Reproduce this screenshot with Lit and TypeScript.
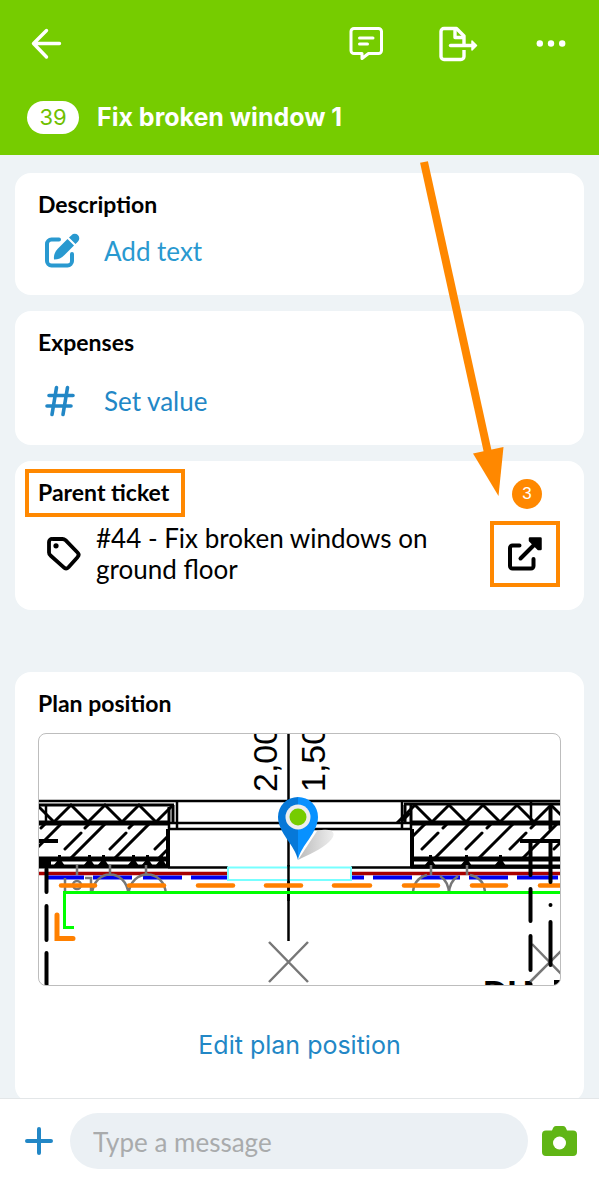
import { LitElement, html, svg, css } from "lit";
import { customElement } from "lit/decorators.js";

const range = (n: number) => Array.from({ length: n }, (_, i) => i);

@customElement("plan-preview")
class PlanPreview extends LitElement {
  static styles = css`
    :host {
      display: block;
      border: 1px solid #bdbdbd;
      border-radius: 8px;
      overflow: hidden;
      background: #fff;
    }
    svg {
      display: block;
      width: 100%;
      height: auto;
    }
    .dim {
      font: 34px "Liberation Sans", Arial, sans-serif;
    }
    .room {
      font: bold 34px "Liberation Sans", Arial, sans-serif;
    }
  `;

  private brace(x: number) {
    return svg`<path d="M${x - 18} 822L${x} 804L${x + 18} 822" />`;
  }

  render() {
    const blue = [[48, 84], [93, 132], [143, 182], [191, 230], [349, 364], [373, 412], [421, 460], [469, 508], [517, 558]];
    const orange = [[61, 95], [129, 164], [198, 233], [266, 301], [334, 370], [404, 438], [472, 506], [540, 566]];
    return html`
      <svg viewBox="39 733 521 251" role="img" aria-label="Floor plan with ticket pin">
        <defs>
          <clipPath id="wall-l"><rect x="39" y="822" width="128" height="37" /></clipPath>
          <clipPath id="wall-r"><rect x="412" y="822" width="148" height="37" /></clipPath>
          <linearGradient id="shade" x1="0" x2="1">
            <stop offset="0" stop-color="#bbb" />
            <stop offset="1" stop-color="#eee" />
          </linearGradient>
        </defs>
        <text class="dim" transform="translate(277 791) rotate(-90)">2,00</text>
        <text class="dim" transform="translate(325 791) rotate(-90)">1,50</text>

        <g fill="none" stroke="#000" stroke-width="3">
          ${[37, 71, 105, 139].map((x) => this.brace(x))}
          ${range(5).map((i) => this.brace(415 + i * 34))}
          <path d="M156 821L173 804M402 820L410 812" />
        </g>
        <g clip-path="url(#wall-l)" stroke="#000" stroke-width="3" stroke-linecap="round">
          ${range(5).map((i) => svg`<path d="M${-20 + i * 44} 860L${20 + i * 44} 820M${20 + i * 45} 848L${36 + i * 45} 832M${41 + i * 44} 827L${48 + i * 44} 820" />`)}
        </g>
        <g clip-path="url(#wall-r)" stroke="#000" stroke-width="3" stroke-linecap="round">
          ${range(6).map((i) => svg`<path d="M${388 + i * 44} 860L${428 + i * 44} 820M${422 + i * 44} 848L${438 + i * 44} 832M${443 + i * 44} 827L${450 + i * 44} 820" />`)}
        </g>

        <g fill="none" stroke="#000">
          <path stroke-width="2.500" d="M39 800H560M169 822H411M169 828H411M46 804V822M177 800V828M402 800V828M169 822V828M168 866.500H228M351 866.500H560M531 800V822M411 822V828" />
          <path stroke-width="3" d="M39 804H174M404 803H560M173 804V822M169 806V822M405 804V822M411 804V822" />
          <path stroke-width="5" d="M39 822H168M411 822H560M39 858H168M411 858H560" />
          <path stroke-width="4" d="M168 828V866M412 828V866M39 840H58M520 840H560M39 865.500H168M411 865.500H560" />
          <path stroke-width="2.500" d="M288.500 733V940" />
        </g>
        <rect x="39" y="857" width="12" height="10" />
        <g>
          ${[59, 89, 103, 133, 147, 161, 430, 466, 500].map((x) => svg`<path d="M${x - 6} 865L${x - 1} 859V854H${x + 2}V859L${x + 6} 865Z" />`)}
        </g>

        <path d="M39 872.500H230M349 872.500H560" stroke="#a80000" stroke-width="3.500" />
        <g stroke="#0000f0" stroke-width="4">
          ${blue.map(([a, b]) => svg`<path d="M${a} 876.500H${b}" />`)}
        </g>
        <g fill="none" stroke="#777" stroke-width="2.500">
          <path d="M77 864V874M110 864V874M146 864V874M92 893C94 867 126 867 128.500 893C131 867 164 867 166 893M65 877V892M85 877H91V892M431 864V874M467 864V874M413 893C413 881 420 876 427 874M440 875C446 879 449 886 449 893C449 886 452 879 458 875M470 874C479 876 485 882 485 893" />
          <circle cx="77" cy="884" r="4" />
          <path d="M269 941L308 981M308 941L269 981M532 943L566 978M530 981L566 945" />
        </g>
        <rect x="228" y="866.500" width="123" height="12.500" fill="#fff" stroke="#7ff" stroke-width="2" />
        <path d="M288.500 864V900" stroke="#000" stroke-width="2.500" />
        <g stroke="#ff8000" stroke-width="4.500" stroke-linecap="round">
          ${orange.map(([a, b]) => svg`<path d="M${a} 884.500H${b}" />`)}
        </g>
        <path d="M560 891.500H64.500V926.500H74" fill="none" stroke="#0f0" stroke-width="3" />
        <path d="M57 914V937.500H73" fill="none" stroke="#ff8000" stroke-width="5" stroke-linecap="round" />
        <g stroke="#000" stroke-width="4" stroke-linecap="round">
          <path d="M46.500 868V891M46.500 905V939M46.500 952V984M530.500 842V874M530.500 888V920M530.500 935V969M530.500 983V986M550.500 806V828M550.500 840V881M550.500 904V904.100M550.500 921V964" />
        </g>
        <text class="room" x="483" y="1003">DU</text>
        <rect x="554" y="979" width="6" height="6" />

        <path d="M298 859L317 830C334 826 338 833 329 841C322 848 308 854 298 859Z" fill="url(#shade)" />
        <path d="M298 859C295 844 278 832 278 816A20 20 0 0 1 298 796Z" fill="#0678d8" />
        <path d="M298 859C301 844 318 832 318 816A20 20 0 0 0 298 796Z" fill="#0791ff" />
        <circle cx="298" cy="816" r="12.500" fill="#eee" />
        <circle cx="298" cy="816" r="8.500" fill="#76cc00" />
      </svg>
    `;
  }
}

@customElement("app-root")
class AppRoot extends LitElement {
  static styles = css`
    :host {
      display: flex;
      flex-direction: column;
      position: relative;
      height: 100vh;
      background: #eef3f6;
      color: #000;
      font-family: Lato, "Open Sans", sans-serif;
    }
    * {
      box-sizing: border-box;
    }
    h1, h2, p {
      margin: 0;
    }
    svg {
      display: block;
      flex: none;
    }
    button {
      display: flex;
      align-items: center;
      border: 0;
      padding: 0;
      background: none;
      color: inherit;
      font: inherit;
      text-align: left;
      cursor: pointer;
    }
    header {
      flex: none;
      background: #76cc00;
      color: #fff;
      padding: 24px 32px 21px 27px;
      font-family: Inter, sans-serif;
    }
    .toolbar {
      display: flex;
      align-items: center;
      gap: 56px;
      height: 40px;
    }
    .back {
      margin-right: auto;
    }
    .title {
      display: flex;
      align-items: center;
      gap: 18px;
      margin-top: 36px;
    }
    .count {
      width: 52px;
      border-radius: 17px;
      background: #fff;
      color: #6fc000;
      font-size: 22px;
      line-height: 33px;
      text-align: center;
    }
    h1 {
      font-size: 25px;
      line-height: 34px;
      font-weight: 700;
    }
    main {
      flex: 1;
      min-height: 0;
      overflow-y: auto;
      scrollbar-width: none;
      display: flex;
      flex-direction: column;
      gap: 16px;
      padding: 18px 15px 0;
    }
    .card {
      flex: none;
      position: relative;
      background: #fff;
      border-radius: 16px;
      padding: 17px 23px 25px;
    }
    .plan {
      margin-top: 46px;
    }
    h2 {
      position: relative;
      width: fit-content;
      font-size: 23px;
      line-height: 28px;
      font-weight: 700;
    }
    .marked::after {
      content: "";
      position: absolute;
      inset: -9px -16px -11px -13px;
      border: 4px solid #ff8800;
    }
    .action {
      gap: 24px;
      width: 100%;
      margin-top: 14px;
      padding-left: 6px;
      font-size: 26px;
      line-height: 38px;
      color: #2999d0;
    }
    .value {
      margin-top: 26px;
      color: #2287c6;
    }
    .parent {
      display: flex;
      align-items: center;
      gap: 14px;
      margin-top: 17px;
      padding-left: 8px;
      font-size: 26px;
      line-height: 31px;
    }
    .parent p {
      flex: 1;
    }
    .open {
      justify-content: center;
      width: 70px;
      height: 66px;
      margin: -2px 1px -2px 30px;
      border: 4px solid #ff8800;
    }
    .step {
      position: absolute;
      top: 18px;
      right: 42px;
      width: 30px;
      border-radius: 50%;
      background: #ff8800;
      color: #fff;
      font: 17px/30px "Liberation Sans", Arial, sans-serif;
      text-align: center;
    }
    plan-preview {
      margin-top: 16px;
    }
    .edit {
      margin: 43px auto 16px;
      font: 25px/32px Inter, sans-serif;
      color: #2287c6;
    }
    footer {
      flex: none;
      display: flex;
      align-items: center;
      gap: 14px;
      padding: 14px 22px 30px 22px;
      border-top: 1px solid #e3e6e8;
      background: #fff;
    }
    input {
      flex: 1;
      min-width: 0;
      height: 56px;
      border: 0;
      border-radius: 28px;
      padding: 2px 23px 0;
      background: #ebf0f4;
      color: #222;
      font: 26px Lato, sans-serif;
    }
    input::placeholder {
      color: #a9abac;
      opacity: 1;
    }
    .pointer {
      position: absolute;
      top: 160px;
      right: 94px;
      pointer-events: none;
    }
  `;

  render() {
    return html`
      <header>
        <div class="toolbar">
          <button class="back" aria-label="Back">
            <svg width="36" height="36" viewBox="0 0 36 36" fill="none" stroke="#fff" stroke-width="3.400" stroke-linecap="round" stroke-linejoin="round">
              <path d="M19.500 4.500L6.500 17.500L19.500 31M7 17.500H32.500" />
            </svg>
          </button>
          <button aria-label="Comments">
            <svg width="36" height="36" viewBox="0 0 36 36" fill="none" stroke="#fff" stroke-width="3" stroke-linecap="round" stroke-linejoin="round">
              <path d="M7 2.500H31.500A3 3 0 0 1 34.500 5.500V24.500A3 3 0 0 1 31.500 27.500H21.500L15 32.500V27.500H7A3 3 0 0 1 4 24.500V5.500A3 3 0 0 1 7 2.500Z" />
              <path d="M12.500 12H26M12.500 18H20.500" />
            </svg>
          </button>
          <button aria-label="Export">
            <svg width="40" height="36" viewBox="0 0 40 36" fill="none" stroke="#fff" stroke-width="3.400" stroke-linejoin="round">
              <path d="M25 18V10L17.500 2.500H5A3 3 0 0 0 2 5.500V30.500A3 3 0 0 0 5 33.500H22A3 3 0 0 0 25 30.500V24" />
              <path d="M16 3V11.500H24.500" />
              <path d="M11.500 19.500H34" stroke-linecap="round" />
              <path d="M33 15V24L37.500 19.500Z" fill="#fff" stroke-width="1.500" />
            </svg>
          </button>
          <button aria-label="More">
            <svg width="32" height="36" viewBox="0 0 32 36" fill="#fff">
              <circle cx="4.800" cy="17.500" r="3.200" /><circle cx="16" cy="17.500" r="3.200" /><circle cx="27.200" cy="17.500" r="3.200" />
            </svg>
          </button>
        </div>
        <div class="title">
          <span class="count">39</span>
          <h1>Fix broken window 1</h1>
        </div>
      </header>

      <main>
        <section class="card">
          <h2>Description</h2>
          <button class="action">
            <svg width="36" height="38" viewBox="0 0 36 38" fill="none" stroke="#2999d0">
              <path d="M15 7.500H7.500A4.500 4.500 0 0 0 3 12V29A4.500 4.500 0 0 0 7.500 33.500H23.500A4.500 4.500 0 0 0 28 29V22" stroke-width="4" stroke-linecap="round" />
              <path d="M10 27.500C9.500 23 11 19.500 14 16.500L23.500 7L30 13.500L20.500 23C17.500 26 14.500 27.500 10 27.500Z" fill="#2999d0" stroke="none" />
              <path d="M25 5.500L27.500 3.200A4.400 4.400 0 0 1 34 9.500L31.500 12Z" fill="#2999d0" stroke="none" />
            </svg>
            Add text
          </button>
        </section>

        <section class="card">
          <h2>Expenses</h2>
          <button class="action value">
            <svg width="36" height="38" viewBox="0 0 36 38" fill="none" stroke="#2287c6" stroke-width="3.600" stroke-linecap="round">
              <path d="M12.500 5.500L8 32.500M23.500 5.500L19 32.500M5 13.500H29M3 24H27" />
            </svg>
            Set value
          </button>
        </section>

        <section class="card">
          <h2 class="marked">Parent ticket</h2>
          <div class="parent">
            <svg width="36" height="36" viewBox="0 0 36 36" fill="none" stroke="#000" stroke-width="3.800" stroke-linejoin="round">
              <path d="M6.500 3H16.500C17.800 3 18.500 3.300 19.500 4.200L31.500 16.500C33.200 18.200 33.200 19.500 31.500 21.200L22.500 31.200C20.800 33 19.300 33 17.500 31.200L4.500 19.500C3.500 18.500 3 17.800 3 16.500V6A3 3 0 0 1 6.500 3Z" />
              <circle cx="10" cy="9.800" r="2.600" fill="#000" stroke="none" />
            </svg>
            <p>#44 - Fix broken windows on ground floor</p>
            <button class="open" aria-label="Open parent ticket">
              <svg width="36" height="36" viewBox="0 0 36 36" fill="none" stroke="#000" stroke-width="4" stroke-linecap="round" stroke-linejoin="round">
                <path d="M12.500 9.500H5.500A2.500 2.500 0 0 0 3 12V30A2.500 2.500 0 0 0 5.500 32.500H24A2.500 2.500 0 0 0 26.500 30V23" />
                <path d="M13.500 22.500L29 7" />
                <path d="M23 2.500H33.500V13L31.500 13L23 4.500Z" fill="#000" stroke-width="2.500" />
              </svg>
            </button>
          </div>
          <span class="step">3</span>
        </section>

        <section class="card plan">
          <h2>Plan position</h2>
          <plan-preview></plan-preview>
          <button class="edit">Edit plan position</button>
        </section>
      </main>

      <footer>
        <button aria-label="Add attachment">
          <svg width="34" height="34" viewBox="0 0 34 34" stroke="#2287c6" stroke-width="4" stroke-linecap="round">
            <path d="M17 5V29M5 17H29" />
          </svg>
        </button>
        <input type="text" placeholder="Type a message" aria-label="Type a message" />
        <button aria-label="Take photo">
          <svg width="35" height="32" viewBox="0 0 35 32">
            <path d="M4 5.500H10L11.200 2.800A3 3 0 0 1 13.800 1H21.200A3 3 0 0 1 23.800 2.800L25 5.500H31A4 4 0 0 1 35 9.500V27A4 4 0 0 1 31 31H4A4 4 0 0 1 0 27V9.500A4 4 0 0 1 4 5.500Z" fill="#60b515" />
            <circle cx="17.500" cy="18" r="6.500" fill="#fff" />
          </svg>
        </button>
      </footer>

      <svg class="pointer" width="96" height="336" viewBox="0 0 96 336" aria-hidden="true">
        <path d="M15 2L79.500 295" stroke="#ff8800" stroke-width="8" />
        <path d="M64 293.500L94.500 287L89.500 336Z" fill="#ff8800" />
      </svg>
    `;
  }
}
